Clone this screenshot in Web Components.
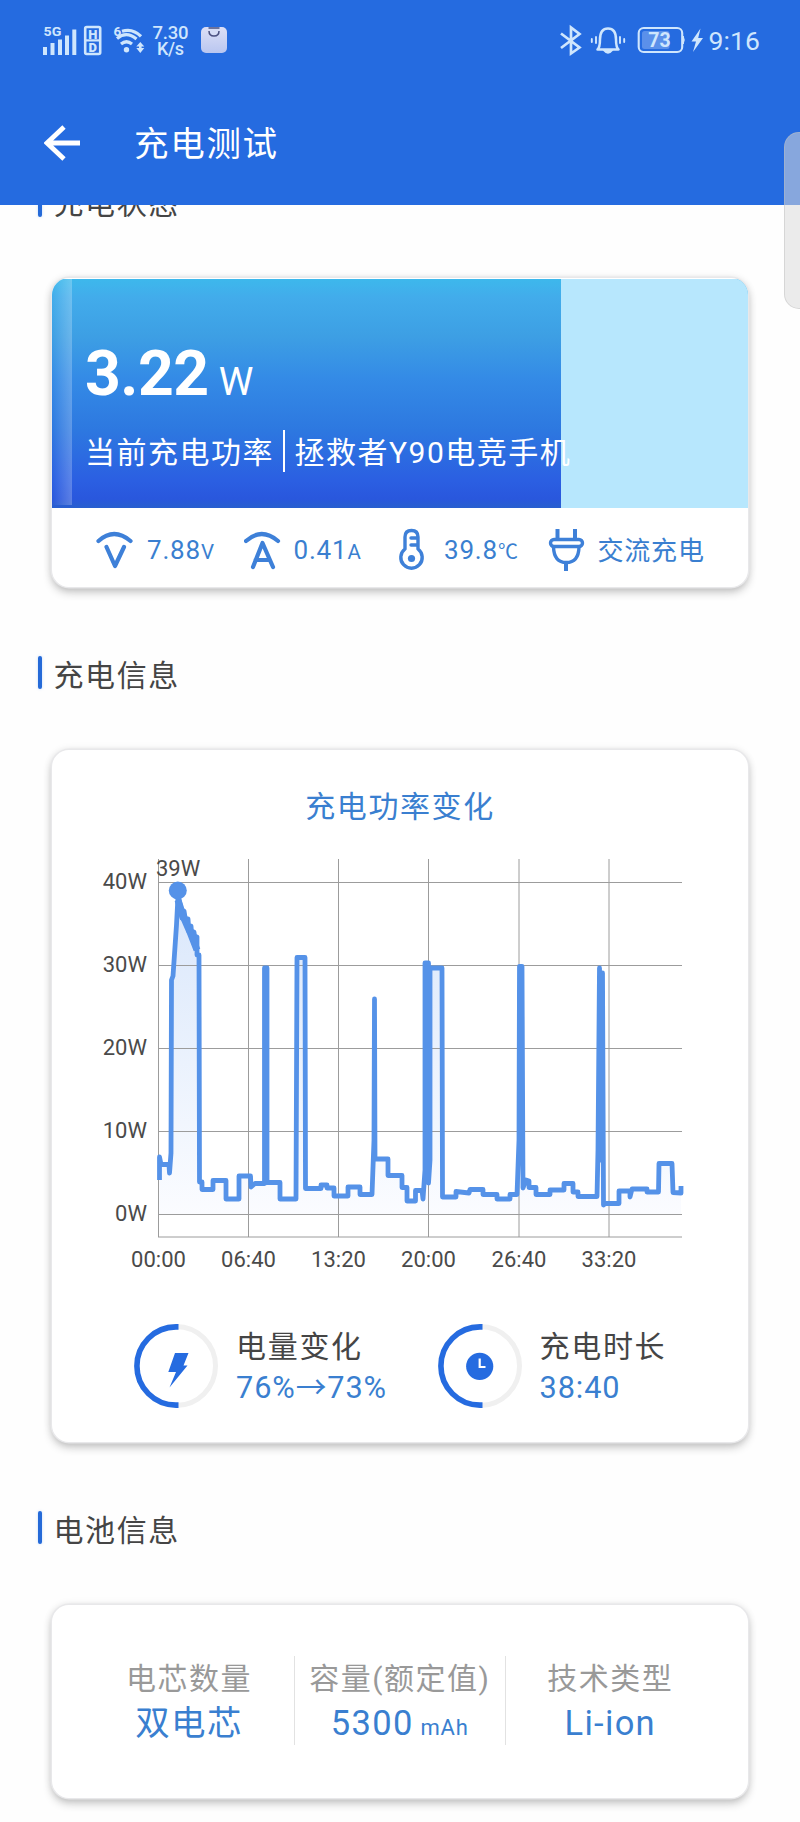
<!DOCTYPE html>
<html lang="zh-CN">
<head>
<meta charset="utf-8">
<title>充电测试</title>
<style>
html,body{margin:0;background:#fff}
body{font-family:Roboto,"Noto Sans CJK SC",sans-serif;width:800px;height:1822px;overflow:hidden;color:#454545}
</style>
</head>
<body>
<charge-app></charge-app>
<script>
const define = (name, html, setup) => customElements.define(name, class extends HTMLElement {
  constructor() {
    super();
    const t = document.createElement('template');
    t.innerHTML = html;
    this.attachShadow({mode: 'open'}).append(t.content.cloneNode(true));
  }
  connectedCallback() { if (setup) setup(this, this.shadowRoot); }
});

define('status-bar', `
<style>
:host{display:flex;justify-content:space-between;height:70px;padding:0 36px 0 36px}
svg{display:block;height:70px;font-family:Roboto,sans-serif}
</style>
<svg width="204" height="70" viewBox="36 0 204 70" fill="#cfe6fd">
  <text x="43.500" y="36.300" font-size="12.800" font-weight="700" textLength="17.800" lengthAdjust="spacingAndGlyphs">5G</text>
  <path d="M43 47h4v8h-4zM50.500 43h4v12h-4zM58 39.500h4V55h-4zM65 35.500h4V55h-4zM72.300 29.500h4V55h-4z"/>
  <rect x="85.200" y="27" width="15" height="27" rx="1.500" fill="none" stroke="#cfe6fd" stroke-width="2.600"/>
  <path d="M84.500 39.300h16v2.200h-16z"/>
  <text x="92.700" y="38.500" font-size="13" font-weight="900" text-anchor="middle">H</text>
  <text x="92.700" y="52.300" font-size="13" font-weight="900" text-anchor="middle">D</text>
  <text x="113.500" y="36" font-size="13.500" font-weight="700">6</text>
  <g fill="none" stroke="#cfe6fd" stroke-width="3.200">
    <path d="M122 31.300q10.500-3.500 19 5M117 38.500q9.500-8 19.500.5M121 44q5.500-4.500 11 0"/>
  </g>
  <circle cx="126.500" cy="49.800" r="2.700"/>
  <path d="M140.300 42l4 4.500h-2.700v1.500h2.700l-4 5-4-5h2.700v-1.500h-2.700z"/>
  <text x="152.500" y="38.700" font-size="18.500" font-weight="500" textLength="36">7.30</text>
  <text x="157" y="55" font-size="18" font-weight="500" textLength="27">K/s</text>
  <linearGradient id="b" x2="0" y2="1"><stop stop-color="#dcdff6"/><stop offset="1" stop-color="#b9c6f0"/></linearGradient>
  <rect x="201" y="27" width="26" height="26" rx="5" fill="url(#b)"/>
  <path d="M209 27.500h10v3.500q0 5-5 5t-5-5z" fill="#d5dcf6"/>
  <path d="M208.500 28h11M209 31q0 5 5 5t5-5" fill="none" stroke="#4a5080" stroke-width="1.500"/>
</svg>
<svg width="210" height="70" viewBox="554 0 210 70" fill="#cfe6fd">
  <path d="M561 33.500L579.500 47.500 571 53.500V27.500L579.500 34 561 48" fill="none" stroke="#cfe6fd" stroke-width="2.700"/>
  <path d="M597.500 49.500q2.500-2 2.500-10 0-11 8-11t8 11q0 8 2.500 10z" fill="none" stroke="#cfe6fd" stroke-width="2.500" stroke-linejoin="round"/>
  <path d="M604 50.500q4 5 8 0z" stroke="#cfe6fd" stroke-width="1.500"/>
  <path d="M596 37v6M620 37v6M591.800 39v3M624.200 39v3" stroke="#cfe6fd" stroke-width="1.900" stroke-linecap="round"/>
  <rect x="638.700" y="28" width="43.500" height="24" rx="5" fill="none" stroke="#cfe6fd" stroke-width="2.100"/>
  <rect x="642" y="31" width="27.500" height="18" rx="2.500" fill="#5b90ea"/>
  <path d="M683.200 36q2 4 0 8z" stroke="#cfe6fd"/>
  <text x="659.500" y="47.200" font-size="19.500" font-weight="700" text-anchor="middle">73</text>
  <path d="M700.500 28.500l-9 13h4.500L693 52l10-14h-4.800z"/>
  <text x="708.500" y="50" font-size="26.500" textLength="51.500">9:16</text>
</svg>`);

define('app-bar', `
<style>
:host{display:flex;align-items:flex-start;height:134px;box-sizing:border-box;padding:45px 0 0 44px;color:#fff}
svg{display:block;margin-top:9px}
.t{font-size:34.500px;letter-spacing:1.700px;line-height:50px;margin:4px 0 0 53px}
</style>
<svg width="37" height="38" viewBox="44 123 37 38"><path d="M80 142H48M64 126L47 142l17 16" fill="none" stroke="#fff" stroke-width="4.800"/></svg>
<div class="t"><slot></slot></div>`);

define('section-title', `
<style>
:host{display:flex;align-items:center;height:33px;padding-left:37.500px;gap:11.500px;font-size:30px;letter-spacing:1.600px;line-height:33px;color:#454545}
i{width:4.500px;height:33px;border-radius:2px;background:#256ad8;box-shadow:0 0 3px rgba(60,140,235,.3)}
span{margin-top:5px}
</style><i></i><span><slot></slot></span>`);

define('app-card', `
<style>
:host{display:block;box-sizing:border-box;margin:0 52px 0 52px;border-radius:17px;background:#fff;box-shadow:0 0 0 1.500px #e8e8ea,0 0 8px rgba(0,0,0,.1),0 5px 10px rgba(0,0,0,.24);overflow:hidden}
</style><slot></slot>`);

define('power-hero', `
<style>
:host{display:block;margin-top:1px;height:229px;background:linear-gradient(to right,transparent 509px,#b7e7fd 509px),linear-gradient(#3db8ec 0%,#42aceb 8%,#3d9fe4 25%,#348be6 43%,#2d78e0 66%,#2b5fe2 88%,#2957dd 96%,#285fce 100%);color:#fff;box-sizing:border-box}
.w{display:flex;height:229px}
.shine{flex:none;width:20px;height:226px;background:linear-gradient(to right,rgba(255,255,255,0),rgba(255,255,255,.24))}
.c{padding:60px 0 0 13px}
.p{display:flex;align-items:baseline;line-height:70px;height:70px;font-size:62.500px;font-weight:700;letter-spacing:-.5px}
.p small{font-size:39px;font-weight:400;margin-left:10px}
.l{display:flex;align-items:center;margin-top:20px;height:44px;font-size:30px;letter-spacing:1.500px;line-height:44px;white-space:nowrap}
.l b{width:2px;height:42px;background:#fff;margin:0 9.500px 0 9px}
.l span{margin-top:3px}
</style>
<div class="w"><div class="shine"></div><div class="c">
<div class="p"><span>3.22</span><small>W</small></div>
<div class="l"><span>当前充电功率</span><b></b><span>拯救者Y90电竞手机</span></div></div></div>`);

define('stat-item', `
<style>
:host{display:flex;align-items:center;color:#3a7fd0;font-size:26px;letter-spacing:.8px;line-height:40px;white-space:nowrap}
.i{width:var(--icon,51px);height:45px;flex:none}
span{margin-top:1px}
::slotted(small){font-size:20.500px}
</style><div class="i"><slot name="icon"></slot></div><span><slot></slot></span>`);

define('stat-row', `
<style>
:host{display:grid;grid-template-columns:148.500px 154.500px 149.500px auto;padding-left:43px;height:80px;align-items:center}
svg{display:block;fill:none;stroke:#3e80d8;stroke-width:4.200;stroke-linecap:round;stroke-linejoin:round}
stat-item{margin-top:4px}
</style>
<stat-item style="--icon:52px"><svg slot="icon" width="40" height="45" viewBox="95 526 40 45"><path d="M98.500 539q15.500-14 32 0M106.500 545l8.500 19 9-19"/></svg>7.88<small>V</small></stat-item>
<stat-item style="--icon:50px"><svg slot="icon" width="40" height="45" viewBox="244.500 526 40 45"><path d="M246.500 539q15.500-14 32 0M253.500 565l9.500-24 10.500 24M256 558h14"/></svg>0.41<small>A</small></stat-item>
<stat-item style="--icon:46px"><svg slot="icon" width="30" height="45" viewBox="399 526 30 45"><path d="M406 547v-12q0-6.500 6.500-6.500t6.500 6.500v12a10.700 10.700 0 1 1-13 0zM412 536h6.500M412 543h6.500" stroke-width="3.400"/><circle cx="412.500" cy="556.500" r="3.600" fill="#3e80d8" stroke="none"/></svg>39.8<small style="letter-spacing:0;font-size:20px">℃</small></stat-item>
<stat-item style="--icon:50px"><svg slot="icon" width="40" height="45" viewBox="548.500 526 40 45"><path d="M558 527v9M575.500 527v9M566.500 561v8" stroke-linecap="butt" stroke-width="4"/><rect x="551" y="537.500" width="32" height="7" rx="3.500" stroke-width="3.400"/><path d="M554 545q.5 15.500 12.800 15.500T579.500 545" stroke-width="3.400"/></svg>交流充电</stat-item>`);

define('power-chart', `
<style>
:host{display:block}
svg{display:block;font-family:Roboto,sans-serif;font-size:22px;fill:#4a4a4a}
</style>
<svg width="696" height="440" viewBox="52 850 696 440">
<linearGradient id="f" gradientUnits="userSpaceOnUse" x1="0" y1="885" x2="0" y2="1215"><stop stop-color="#cfe0fa"/><stop offset=".8" stop-color="#f1f6fe"/><stop offset="1" stop-color="#fafbff"/></linearGradient>
<path id="area" fill="url(#f)" opacity=".8"/>
<g id="grid" stroke="#9c9c9c" stroke-width="1"></g>
<path id="line" fill="none" stroke="#5592e8" stroke-width="4.800" stroke-linejoin="round"/>
<path d="M178 900L183 916 190 932 197 950" fill="none" stroke="#5592e8" stroke-width="7"/>
<circle cx="177.800" cy="890.500" r="9" fill="#5592e8"/>
<g id="labels"></g>
<text x="156" y="875.500">39W</text>
</svg>`, (host, root) => {
  const $ = id => root.getElementById(id);
  const pts = '159.5,1180 159.5,1157 161,1164.500 169,1164.500 169.500,1173 171,1153 171.500,980 173,976 176.500,925 178,896 181,908 182,918 184,911 186,923 188,919 189,932 191,926 192,938 194,932 195,939 197,937 197,955 199,955 199.500,1182 202,1182 202,1189.500 213,1189.500 213,1180.500 226,1180.500 226,1199 239,1199 239,1176 250.500,1176 251,1187 255,1183.500 264.500,1183.500 264.500,968 267,968 267,1182.500 280,1182.500 280,1199 296,1199 297,957.500 305,957.500 305.500,1188.500 321,1188.500 321,1185 327,1185 327,1188 334,1188 334,1196 348,1196 348,1187 360,1187 360,1194.500 372,1194.500 374,1140 374.500,999 375,1159 388,1159 388,1175.500 402,1175.500 402,1187.500 407,1187.500 407,1201 415.500,1201 415.500,1190.500 422,1190.500 423,1199 425,1170 425,963 428.500,963 428.500,1183 430,1160 430,968 442,968 442.500,1197 456,1197 456,1191.500 469,1193 470,1189.500 483,1189.500 483,1194.500 497,1194.500 497,1199 510,1199 510,1194.500 517,1194.500 519,1140 519.500,966.500 522,966.500 523,1188 526,1180 529,1181 529,1187.500 536,1187.500 536,1194.500 550,1194.500 550,1190 564,1190 564,1183.500 573,1183.500 573,1192 578,1192 578,1196.500 597,1196.500 598,1150 599.500,968 601,1160 602.500,973 603.500,1205 605,1203.500 619,1203.500 619,1191 630,1191 630,1197 632,1189 647,1189 647,1192 658.500,1192 659,1163.500 672,1163.500 673,1192.500 681,1193 681,1186';
  $('line').setAttribute('d', 'M' + pts.replace(/ /g, 'L'));
  $('area').setAttribute('d', 'M' + pts.replace(/ /g, 'L') + 'L681,1214L159,1214Z');
  const xs = [158.5, 248.5, 338.5, 428.5, 519, 609], ys = [882.5, 965.500, 1048.500, 1131.500, 1214.500];
  $('grid').innerHTML = xs.map(x => `<path d="M${x} 859V1237"/>`).join('') + '<path d="M158 1237H682"/>' + ys.map(y => `<path d="M158 ${y}H682"/>`).join('');
  $('labels').innerHTML = ys.map((y, i) => `<text x="147" y="${y + 6.5}" text-anchor="end">${40 - i * 10}W</text>`).join('') +
    ['00:00', '06:40', '13:20', '20:00', '26:40', '33:20'].map((t, i) => `<text x="${xs[i]}" y="1267" text-anchor="middle">${t}</text>`).join('');
});

define('ring-item', `
<style>
:host{display:flex;color:#454545}
svg{display:block;margin-right:18px}
.k,.v{white-space:nowrap;line-height:42px;height:42px}
.k{font-size:30px;letter-spacing:1.700px;padding-top:2px;margin-bottom:-1px}
.v{color:#3a7fd0;font-size:30.700px;letter-spacing:.9px}
</style>
<svg width="84" height="84" viewBox="0 0 84 84"><circle cx="42" cy="42" r="39.500" fill="none" stroke="#f0f0f0" stroke-width="5"/><path d="M44.500 2.900H42a39.100 39.100 0 0 0 0 78.200h2.500" fill="none" stroke="#256be0" stroke-width="5.600"/><g id="g"></g></svg>
<div><div class="k"><slot name="key"></slot></div><div class="v"><slot></slot></div></div>`,
(host, root) => {
  root.getElementById('g').innerHTML = host.getAttribute('icon') === 'bolt'
    ? '<path d="M41 29h13.500l-5 12.500h4L35.500 63.500 42 48h-7.700z" fill="#256be0"/>'
    : '<circle cx="41.700" cy="42.300" r="13.600" fill="#256be0"/><path d="M41.700 34.500v8.500h5.800" fill="none" stroke="#fff" stroke-width="2.200"/>';
});

define('charge-panel', `
<style>
:host{display:block;height:692px}
h2{margin:0;padding-top:35px;height:65px;line-height:44px;text-align:center;font-size:30px;letter-spacing:1.600px;font-weight:400;color:#3a7fd0}
.r{display:flex;padding-left:82px;margin-top:34px}
ring-item{width:303.500px}
</style>
<h2>充电功率变化</h2>
<power-chart></power-chart>
<div class="r">
<ring-item icon="bolt"><span slot="key">电量变化</span>76%→73%</ring-item>
<ring-item icon="clock"><span slot="key">充电时长</span>38:40</ring-item>
</div>`);

define('info-cell', `
<style>
:host{display:block;text-align:center;white-space:nowrap;height:89px}
:host(:not(:first-of-type)){border-left:1px solid #e2e2e2}
.k{color:#999;font-size:30px;letter-spacing:1.500px;line-height:44px;padding-top:1px}
.v{color:#3a7fd0;font-size:34.500px;letter-spacing:1.300px;line-height:44px;word-spacing:-3px}
::slotted(small){font-size:22px;letter-spacing:.8px}
</style><div class="k"><slot name="key"></slot></div><div class="v"><slot></slot></div>`);

define('battery-panel', `
<style>
:host{display:grid;grid-template-columns:210px 210.500px 210.500px;padding:51px 32px 53px}
</style>
<info-cell><span slot="key">电芯数量</span>双电芯</info-cell>
<info-cell><span slot="key">容量(额定值)</span>5300 <small>mAh</small></info-cell>
<info-cell><span slot="key">技术类型</span>Li-ion</info-cell>`);

define('charge-app', `
<style>
:host{display:block;position:relative;height:1822px;overflow:hidden;background:#fefefe}
header{background:#256be0;height:204.500px}
main{height:1617.500px;overflow:hidden}
section-title{margin-bottom:61px}
section-title:first-child{margin-top:-20.500px}
app-card{margin-bottom:69px}
.one{height:309px}
.three{height:193px}
.handle{position:absolute;left:784px;top:132px;width:30px;height:175px;border-radius:15px;background:rgba(218,218,218,.54);border:1px solid rgba(190,190,190,.45)}
</style>
<header><status-bar></status-bar><app-bar>充电测试</app-bar></header>
<main>
<section-title>充电状态</section-title>
<app-card class="one"><power-hero></power-hero><stat-row></stat-row></app-card>
<section-title>充电信息</section-title>
<app-card><charge-panel></charge-panel></app-card>
<section-title>电池信息</section-title>
<app-card class="three"><battery-panel></battery-panel></app-card>
</main>
<div class="handle"></div>`);
</script>
</body>
</html>
